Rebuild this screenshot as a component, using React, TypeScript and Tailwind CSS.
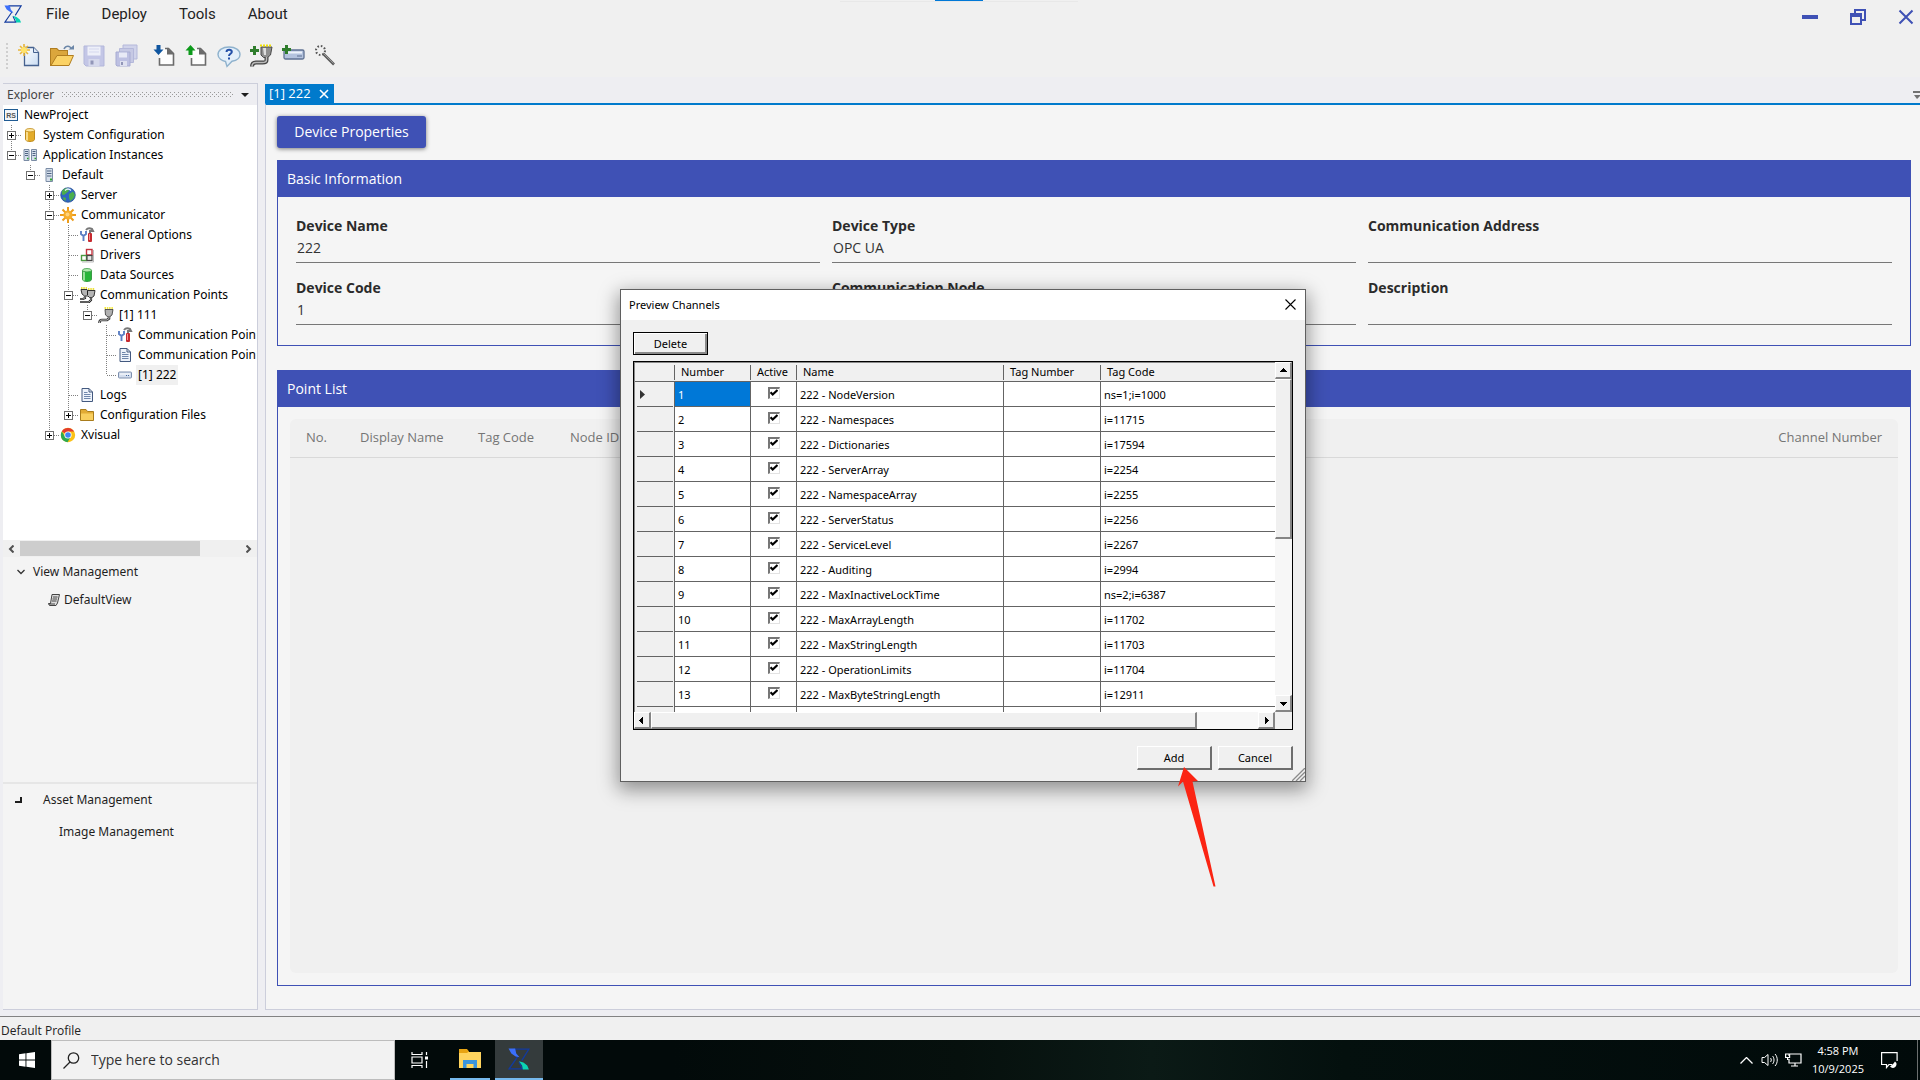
import type { ReactNode } from "react";

/* ---------- Icons ---------- */

function Logo({ size }: { size: number }) {
  return (
    <svg width={size} height={size} viewBox="0 0 20 20" fill="none">
      <path d="M5 1H19L12.500 11.500M9 7.500 1 19H13L10 12.500" stroke="#123a9e" strokeWidth="1.200" />
      <path d="M.5.500H6.500L7.500 5 10.500 8.500 7 7.800 3 5z" fill="#3b6ffa" />
      <path d="M10 12l4 1.200 3.500 2.800 1.500 3.500H13.500L12.800 16z" fill="#0bd3b4" />
    </svg>
  );
}

const NewIcon = () => (
  <svg width="24" height="24" viewBox="0 0 24 24">
    <defs>
      <linearGradient id="pg" x1="0" y1="0" x2="1" y2="1">
        <stop offset="0" stopColor="#fff" />
        <stop offset="1" stopColor="#c9dcf2" />
      </linearGradient>
    </defs>
    <path d="M6.500 3.500h9l5 5v13h-14z" fill="url(#pg)" stroke="#46628f" strokeWidth="1.300" />
    <path d="M15.500 3.500v5h5" fill="#dce6f4" stroke="#46628f" />
    <path d="M6 0v12M0 6h12M2 2l8 8M10 2 2 10" stroke="#e8b53a" strokeWidth="1.600" />
    <circle cx="6" cy="6" r="3" fill="#ffe36b" />
  </svg>
);
const OpenIcon = () => (
  <svg width="24" height="24" viewBox="0 0 24 24">
    <path d="M0 4h7l2 2h9v16H0z" fill="#b07d20" />
    <path d="M1 5h5.500l2 2H17v14H1z" fill="#dba63c" />
    <path d="M1 21.500 7 11.500h16.500L19 21.500z" fill="#fbd265" stroke="#b07d20" />
    <path d="M14 5c2-4 6-3.500 7.500 0" fill="none" stroke="#6c87a8" strokeWidth="1.600" />
    <path d="M18.500 5.500H24V1z" fill="#6c87a8" />
  </svg>
);
const SaveIcon = () => (
  <svg width="24" height="24" viewBox="0 0 24 24">
    <path d="M2 2h20v20H4l-2-2z" fill="#c3c6e6" stroke="#b3b7da" />
    <path d="M5.500 2.500h13v9h-13z" fill="#eef0f9" />
    <path d="M7 5h10M7 8h10" stroke="#d5d8ee" />
    <path d="M6.500 15h11v7h-11z" fill="#d6d9ec" />
    <path d="M8.500 16.500h3v4h-3z" fill="#9296b8" />
  </svg>
);
const SaveAllIcon = () => (
  <svg width="24" height="24" viewBox="0 0 24 24">
    <path d="M9 1h14v14H9z" fill="#d0d3ea" stroke="#b4b8da" />
    <path d="M5.500 4.500h14v14h-14z" fill="#c6c9e4" stroke="#b4b8da" />
    <path d="M2 8h14v14H3l-1-1z" fill="#bdc0e2" stroke="#a8acd2" />
    <path d="M5 8.500h8v5H5z" fill="#e8eaf6" />
    <path d="M6 17h7v5H6z" fill="#dfe1f0" />
    <path d="M7 18h2v3H7z" fill="#9296b8" />
  </svg>
);
const TransferIcon = ({ up = false }: { up?: boolean }) => (
  <svg width="24" height="24" viewBox="0 0 24 24">
    <path d="M7 4.500h8l5.500 5.500v11H6.500V13" fill="#fdfdfd" />
    <path d="M12 4.500h3.500l5 5V21H6.500V14" fill="none" stroke="#6b6b6b" strokeWidth="1.600" />
    <path d="M14 3.500 21.300 10.500H14z" fill="#6b6b6b" />
    {up ? (
      <path d="M5.500 1 10.500 6.500H7.500V11H3.500V6.500H.500z" fill="#0d9a1b" />
    ) : (
      <path d="M5.500 11 10.500 5.500H7.500V1H3.500V5.500H.500z" fill="#0f559f" />
    )}
  </svg>
);
const HelpIcon = () => (
  <svg width="24" height="24" viewBox="0 0 24 24">
    <path
      d="M12 3C5.500 3 1 6.300 1 10.500c0 4 4 6.500 7.500 7L10 22.500l5-5.300c4.500-.700 8-3 8-6.700C23 6.300 18.500 3 12 3z"
      fill="#e3effa"
      stroke="#8fb2cd"
      strokeWidth="1.400"
    />
    <path d="M9.500 8c.200-3 5.500-2.800 5.300 0C14.700 9.700 12 10 12 12" fill="none" stroke="#2450a8" strokeWidth="2" />
    <path d="M11 13.500h2v2h-2z" fill="#2450a8" />
  </svg>
);
const AddPointIcon = () => (
  <svg width="24" height="24" viewBox="0 0 24 24">
    <path d="M12 3h11l-1.500 8-3 2.500h-4L12 11z" fill="#8f8f8f" stroke="#4a4a4a" />
    <path d="M14 4h3v7h-2z" fill="#dedede" />
    <path d="M11 1.500h12" stroke="#f2e200" strokeWidth="2" strokeDasharray="2 1" />
    <path d="M17.500 13v3c0 2-1 2.500-4 2.500H7c-2.500 0-4 1-4 4" fill="none" stroke="#444" strokeWidth="4" />
    <path d="M17.500 13v3c0 2-1 2.500-4 2.500H7c-2.500 0-4 1-4 4" fill="none" stroke="#bbb" strokeWidth="1.500" />
    <path d="M5.500 2v9M1 6.500h9" stroke="#2f7d2c" strokeWidth="3" />
  </svg>
);
const AddDeviceIcon = () => (
  <svg width="24" height="24" viewBox="0 0 24 24">
    <rect x="3" y="6" width="20" height="9" rx="1.500" fill="#b4c3de" stroke="#5f7192" strokeWidth="1.300" />
    <path d="M5 8.500h16" stroke="#eef3fb" strokeWidth="2" />
    <path d="M16 12h5" stroke="#5f7192" />
    <path d="M5.500 1v9M1 5.500h9" stroke="#2f7d2c" strokeWidth="3" />
  </svg>
);
const WandIcon = () => (
  <svg width="24" height="24" viewBox="0 0 24 24">
    <circle cx="7.500" cy="6.500" r="4.500" fill="none" stroke="#555" strokeWidth="2" strokeDasharray="1.600 1.900" />
    <path d="m10 9.500 11 11" stroke="#5b5b5b" strokeWidth="2.600" />
    <path d="m10.500 9.500 10 10" stroke="#aaa" strokeWidth=".8" />
  </svg>
);

function ToolIcon() {
  return (
    <svg width="16" height="16" viewBox="0 0 16 16">
      <path d="M2 4v3l2.500 2v5M7 4v3L4.500 9" fill="none" stroke="#5b7fc4" strokeWidth="1.900" />
      <path d="M7 3c2-2.500 4-2 6-1l1 2h-3v3" fill="none" stroke="#777" strokeWidth="2" />
      <rect x="9" y="6" width="4" height="9" rx="1" fill="#c62a2f" />
      <path d="M10.500 7v6" stroke="#f19090" />
    </svg>
  );
}
function PageIcon() {
  return (
    <svg width="16" height="16" viewBox="0 0 16 16">
      <path d="M3 1.500h7l3.500 3.500v9.500H3z" fill="#eef3fb" stroke="#43597f" />
      <path d="M10 1.500V5h3.500" fill="none" stroke="#43597f" />
      <path d="M5 5.500h3.500M5 7.500h6.500M5 9.500h6.500M5 11.500h6.500" stroke="#6f86ab" />
    </svg>
  );
}
function PlugIcon() {
  return (
    <svg width="16" height="16" viewBox="0 0 16 16">
      <path d="M7 2.500h8L14 8l-2 1.500H9.500L7.500 8z" fill="#b0b0b0" stroke="#333" strokeWidth=".8" />
      <path d="M6.500 1h9" stroke="#f0e000" strokeWidth="1.500" strokeDasharray="1.500 .8" />
      <path d="M11 9v2.500l-2 1.500H4c-2 0-2.500 1-2.500 3" fill="none" stroke="#333" strokeWidth="2.600" />
      <path d="M11 9v2.500l-2 1.500H4c-2 0-2.500 1-2.500 3" fill="none" stroke="#ccc" strokeWidth=".9" />
    </svg>
  );
}
function Cylinder({ top, side, edge }: { top: string; side: string; edge: string }) {
  return (
    <svg width="16" height="16" viewBox="0 0 16 16">
      <path d="M3.500 3.500v9c0 1 2 2 4.500 2s4.500-1 4.500-2v-9z" fill={side} stroke={edge} />
      <path d="M5 5v8.500" stroke={top} strokeWidth="1.600" />
      <ellipse cx="8" cy="3.200" rx="4.500" ry="1.700" fill={top} stroke={edge} strokeWidth=".8" />
    </svg>
  );
}

const treeIcons: Record<string, ReactNode> = {
  rs: (
    <svg width="16" height="16" viewBox="0 0 16 16">
      <rect x="1.500" y="2.500" width="13" height="11" fill="#f3f6fa" stroke="#1f5b93" />
      <text x="8" y="11" textAnchor="middle" fontFamily="Liberation Sans, sans-serif" fontSize="7" fontWeight="700" fill="#555">
        RS
      </text>
    </svg>
  ),
  db: <Cylinder top="#ffe9a3" side="#e3ac2a" edge="#c08c1c" />,
  green: <Cylinder top="#b2ecb0" side="#27b53a" edge="#3b9b46" />,
  servers: (
    <svg width="16" height="16" viewBox="0 0 16 16">
      <path d="M2 2.500h5v11H2zM9.500 2.500h5v11h-5z" fill="#d7e0ec" stroke="#7b8ca5" />
      <path d="M3 4.500h3M3 6.500h3M3 8.500h3M10.500 4.500h3M10.500 6.500h3M10.500 8.500h3" stroke="#4f6482" />
      <path d="M5 11.500h1.500M12.500 11.500H14" stroke="#2ba52b" strokeWidth="1.500" />
    </svg>
  ),
  server: (
    <svg width="16" height="16" viewBox="0 0 16 16">
      <path d="M5 1.500h6.500v13H5z" fill="#d7e0ec" stroke="#7b8ca5" />
      <path d="M6 4h4.500M6 6.500h4.500M6 9h4.500" stroke="#4f6482" />
      <path d="M9 12.500h2" stroke="#2ba52b" strokeWidth="1.800" />
    </svg>
  ),
  globe: (
    <svg width="16" height="16" viewBox="0 0 16 16">
      <circle cx="8" cy="8" r="7.300" fill="#2f66c2" stroke="#274e8d" strokeWidth=".7" />
      <path d="M2 4c2-2.500 4-3 5.500-2.500L9 4 6 6.500 4 8 2 7.500zM9 7l4-2.500L15 8l-2 4-3 2-1-3.500zM3.500 10 6 11l-.500 3L3 12z" fill="#4cae4c" />
      <path d="M5 3.500c2-2 4-2 6 0" stroke="#e8f3ff" strokeWidth="1.200" fill="none" />
    </svg>
  ),
  sun: (
    <svg width="16" height="16" viewBox="0 0 16 16">
      <path d="M8 0v16M0 8h16M2.500 2.500l11 11M13.500 2.500l-11 11" stroke="#ec9c1b" strokeWidth="2" />
      <circle cx="8" cy="8" r="4.600" fill="#f6ae2d" />
      <circle cx="7.500" cy="7.500" r="2" fill="#ffd27a" />
    </svg>
  ),
  tools: <ToolIcon />,
  drivers: (
    <svg width="16" height="16" viewBox="0 0 16 16">
      <rect x="7.500" y="2.500" width="5.500" height="5.500" fill="#fff" stroke="#c2313c" strokeWidth="1.400" />
      <rect x="2.500" y="8.500" width="5" height="5" fill="#fff" stroke="#4b9a3f" strokeWidth="1.400" />
      <rect x="8" y="8.500" width="5" height="5" fill="#e7e7e7" stroke="#444" strokeWidth="1.200" />
      <path d="M14.500 3v12H3" fill="none" stroke="#bbb" />
    </svg>
  ),
  plugs: (
    <svg width="17" height="16" viewBox="0 0 17 16">
      <path d="M2 2.500h6l.500 1H16L15 9l-2 1.500h-2.500L9 9H5.500L3 7z" fill="#b5b5b5" stroke="#222" strokeWidth=".9" />
      <path d="M8.500 3.500V8" stroke="#222" />
      <path d="M2 1h6M9 2h7" stroke="#e6d800" strokeWidth="1.500" strokeDasharray="1.500 .8" />
      <path d="M6 9v2L4 12H1M12 10.500V13l-2 2H1" fill="none" stroke="#222" strokeWidth="2.200" />
      <path d="M6 9v2L4 12H1M12 10.500V13l-2 2H1" fill="none" stroke="#ccc" strokeWidth=".7" />
    </svg>
  ),
  plug: <PlugIcon />,
  page: <PageIcon />,
  device: (
    <svg width="16" height="16" viewBox="0 0 16 16">
      <rect x="1.500" y="5" width="13" height="6" rx="1" fill="#d4deee" stroke="#7d8fae" />
      <path d="M3 7h10" stroke="#fff" />
      <path d="M9 8.500h1M11 8.500h1" stroke="#44689c" />
    </svg>
  ),
  folder: (
    <svg width="16" height="16" viewBox="0 0 16 16">
      <path d="M1.500 2.500H7l1.500 2h6v9h-13z" fill="#e2ab34" stroke="#a97c1c" />
      <path d="M2 6.500h12v6.500H2z" fill="#f9cf5e" />
    </svg>
  ),
  chrome: (
    <svg width="16" height="16" viewBox="0 0 16 16">
      <circle cx="8" cy="8" r="7.200" fill="#fbc116" />
      <path d="M8 8 1.800 4.400A7.200 7.200 0 0 1 14.200 4.600H8z" fill="#e33b2e" />
      <path d="M1.800 4.400A7.200 7.200 0 0 0 7.500 15.200L10.600 10 8 8 5 9.500z" fill="#2da94f" />
      <circle cx="8" cy="8" r="3.600" fill="#fff" />
      <circle cx="8" cy="8" r="2.800" fill="#4285f4" />
    </svg>
  ),
};

/* ---------- Explorer tree ---------- */

/* Guide codes: v line, t tee, l elbow, P/p and M/m expanders (capital: line goes on below). */
type Row = { guides: string; icon: string; label: string; selected?: boolean };
const tree: Row[] = [
  { guides: "", icon: "rs", label: "NewProject" },
  { guides: "P", icon: "db", label: "System Configuration" },
  { guides: "m", icon: "servers", label: "Application Instances" },
  { guides: " m", icon: "server", label: "Default" },
  { guides: "  P", icon: "globe", label: "Server" },
  { guides: "  M", icon: "sun", label: "Communicator" },
  { guides: "  vt", icon: "tools", label: "General Options" },
  { guides: "  vt", icon: "drivers", label: "Drivers" },
  { guides: "  vt", icon: "green", label: "Data Sources" },
  { guides: "  vM", icon: "plugs", label: "Communication Points" },
  { guides: "  vvm", icon: "plug", label: "[1] 111" },
  { guides: "  vv t", icon: "tools", label: "Communication Poin" },
  { guides: "  vv t", icon: "page", label: "Communication Poin" },
  { guides: "  vv l", icon: "device", label: "[1] 222", selected: true },
  { guides: "  vt", icon: "page", label: "Logs" },
  { guides: "  vp", icon: "folder", label: "Configuration Files" },
  { guides: "  p", icon: "chrome", label: "Xvisual" },
];

function Guide({ code, label }: { code: string; label: string }) {
  if (code === " ") return <span className="w-[19px] shrink-0" />;
  const box = "PpMm".includes(code);
  const down = "vtPM".includes(code);
  const drawing = (
    <svg width="19" height="20" viewBox="0 0 19 20" fill="none" shapeRendering="crispEdges">
      <path d={down ? "M8.500 0V20" : "M8.500 0V10"} stroke="#808080" strokeDasharray="1 1" />
      {code !== "v" && <path d="M9 10.500H19" stroke="#808080" strokeDasharray="1 1" />}
      {box && (
        <>
          <rect x="4.500" y="6.500" width="8" height="8" fill="#fff" stroke="#707070" />
          <path d="M6 10.500h5" stroke="#000" />
          {"Pp".includes(code) && <path d="M8.500 8v5" stroke="#000" />}
        </>
      )}
    </svg>
  );
  return box ? (
    <button aria-label={"Toggle " + label} className="w-[19px] shrink-0">
      {drawing}
    </button>
  ) : (
    <span className="w-[19px] shrink-0">{drawing}</span>
  );
}

function Explorer() {
  return (
    <aside className="ml-[3px] flex w-[255px] shrink-0 flex-col border-t border-r border-b border-[#cccedb] bg-[#f4f4f4] font-['Noto_Sans','Open_Sans',sans-serif] text-xs text-black">
      <header className="flex h-[21px] shrink-0 items-center gap-2 bg-[#eeeef2] pr-2 pl-1 text-xs text-[#444]">
        <span>Explorer</span>
        <svg className="h-[5px] min-w-0 flex-1" shapeRendering="crispEdges">
          <defs>
            <pattern id="grip" width="4" height="4" patternUnits="userSpaceOnUse">
              <path d="M0 0h1v1H0zM2 2h1v1H2z" fill="#999" />
            </pattern>
          </defs>
          <rect width="100%" height="5" fill="url(#grip)" />
        </svg>
        <button aria-label="Panel menu">
          <svg width="8" height="4" viewBox="0 0 8 4">
            <path d="M0 0h8L4 4z" fill="#1e1e1e" />
          </svg>
        </button>
      </header>
      <ul className="h-[435px] shrink-0 overflow-hidden bg-white">
        {tree.map((row, i) => (
          <li key={i} className="flex h-5 items-center whitespace-nowrap">
            {row.guides.split("").map((code, j) => (
              <Guide key={j} code={code} label={row.label} />
            ))}
            <span className="w-4 shrink-0">{treeIcons[row.icon]}</span>
            <span className={row.selected ? "ml-[3px] bg-[#f0f0f0] px-[2px] leading-5" : "ml-[3px] px-[2px] leading-5"}>
              {row.label}
            </span>
          </li>
        ))}
      </ul>
      <div className="flex h-[17px] shrink-0 items-center gap-[6px] bg-[#f0f0f0] px-[5px]">
        <svg width="6" height="8" viewBox="0 0 6 8" fill="none" stroke="#505050" strokeWidth="2">
          <path d="M5.500.500 2 4l3.500 3.500" />
        </svg>
        <div className="h-[15px] flex-1">
          <div className="h-full w-[82%] bg-[#cdcdcd]" />
        </div>
        <svg width="6" height="8" viewBox="0 0 6 8" fill="none" stroke="#505050" strokeWidth="2">
          <path d="M.500.500 4 4 .500 7.500" />
        </svg>
      </div>
      <section className="h-[227px] shrink-0 border-b-2 border-[#e6e6e6] pt-px text-[#1e1e1e]">
        <button className="flex h-7 items-center gap-2 pl-[14px]">
          <svg width="8" height="6" viewBox="0 0 8 6" fill="none" stroke="#333" strokeWidth="1.300">
            <path d="M.500 1 4 4.500 7.500 1" />
          </svg>
          View Management
        </button>
        <button className="flex h-7 items-center gap-1 pl-[45px]">
          <svg width="12" height="12" viewBox="0 0 12 12" fill="none" stroke="#444">
            <path d="M4 .500h7.500L9.500 9 8 11.500H1.500L.500 9.500H2.500z" fill="#ddd" />
            <path d="M5 3h4.500M4.500 5H9M4 7h4.500M.500 10H7" />
          </svg>
          DefaultView
        </button>
      </section>
      <section className="text-[#1e1e1e]">
        <button className="flex h-8 items-center gap-[21px] pl-3">
          <svg width="7" height="6" viewBox="0 0 7 6">
            <path d="M5 0h2v6H0V4h5z" fill="#1e1e1e" />
          </svg>
          Asset Management
        </button>
        <button className="flex h-8 items-center pl-14">Image Management</button>
      </section>
    </aside>
  );
}

/* ---------- Document ---------- */

const fields = [
  ["Device Name", "222"],
  ["Device Type", "OPC UA"],
  ["Communication Address", ""],
  ["Device Code", "1"],
  ["Communication Node", ""],
  ["Description", ""],
];

function DocumentArea() {
  return (
    <main className="ml-[7px] flex min-w-0 flex-1 flex-col">
      <div className="mt-px flex h-[19px] items-stretch justify-between">
        <div className="flex items-center gap-2 bg-[#007acc] pr-[5px] pl-1 text-[13px] text-white">
          <span>[1] 222</span>
          <button aria-label="Close tab">
            <svg width="10" height="10" viewBox="0 0 10 10" stroke="#fff" strokeWidth="1.600">
              <path d="m1 1 8 8M9 1 1 9" />
            </svg>
          </button>
        </div>
        <button aria-label="Open documents" className="mt-1">
          <svg width="7" height="9" viewBox="0 0 7 9" fill="#717171">
            <path d="M0 0h7v2H0zM1 4h7L4 8z" />
          </svg>
        </button>
      </div>
      <div className="flex flex-1 flex-col border-t-2 border-b border-l border-t-[#007acc] border-b-[#cccedb] border-l-[#cccedb] bg-[#f5f5f5] pt-[11px] pr-[9px] pb-[23px] pl-[11px] text-sm">
        <button className="h-8 w-[149px] self-start rounded-[3px] bg-[#3f51b5] text-white shadow-[0_1px_4px_rgba(0,0,0,0.5)]">
          Device Properties
        </button>
        <section className="mt-3 border border-[#3f51b5]">
          <h2 className="flex h-9 items-center bg-[#3f51b5] px-[9px] text-white">Basic Information</h2>
          <div className="grid grid-cols-3 gap-x-3 gap-y-[13px] px-[18px] pt-[17px] pb-5">
            {fields.map(([label, value]) => (
              <label key={label} className="block leading-6 text-[#333]">
                <span className="block font-bold text-[#2b2b2b]">{label}</span>
                <input
                  readOnly
                  defaultValue={value}
                  className="block h-[25px] w-full border-b border-[#777] bg-transparent pb-[6px] pl-px outline-none"
                />
              </label>
            ))}
          </div>
        </section>
        <section className="mt-6 flex flex-1 flex-col border border-[#3f51b5]">
          <h2 className="flex h-9 items-center bg-[#3f51b5] px-[9px] text-white">Point List</h2>
          <div className="mx-3 mt-3 mb-3 flex-1 rounded-md bg-[#f0f0f0]">
            <table className="w-full text-left text-[13px] text-[#757575]">
              <thead>
                <tr className="h-[38px] border-b border-[#d9d9d9]">
                  <th className="w-[54px] pl-4 font-normal">No.</th>
                  <th className="w-[118px] pl-4 font-normal">Display Name</th>
                  <th className="w-[92px] pl-4 font-normal">Tag Code</th>
                  <th className="pl-4 font-normal">Node ID</th>
                  <th className="pr-4 text-right font-normal">Channel Number</th>
                </tr>
              </thead>
            </table>
          </div>
        </section>
      </div>
    </main>
  );
}

/* ---------- Dialog ---------- */

const channels = [
  ["NodeVersion", "ns=1;i=1000"],
  ["Namespaces", "i=11715"],
  ["Dictionaries", "i=17594"],
  ["ServerArray", "i=2254"],
  ["NamespaceArray", "i=2255"],
  ["ServerStatus", "i=2256"],
  ["ServiceLevel", "i=2267"],
  ["Auditing", "i=2994"],
  ["MaxInactiveLockTime", "ns=2;i=6387"],
  ["MaxArrayLength", "i=11702"],
  ["MaxStringLength", "i=11703"],
  ["OperationLimits", "i=11704"],
  ["MaxByteStringLength", "i=12911"],
];

function ScrollButton({ label, d }: { label: string; d: string }) {
  return (
    <button
      aria-label={label}
      className="flex h-[17px] w-[17px] shrink-0 items-center justify-center border-t border-r-2 border-b-2 border-l border-t-white border-r-[#858585] border-b-[#858585] border-l-white bg-[#f0f0f0]"
    >
      <svg width="7" height="7" viewBox="0 0 7 7" shapeRendering="crispEdges">
        <path d={d} fill="#000" />
      </svg>
    </button>
  );
}

function Checkbox({ label }: { label: string }) {
  return (
    <span className="relative mx-auto mb-[2px] block h-3 w-3">
      <input
        type="checkbox"
        defaultChecked
        aria-label={label}
        className="peer block h-3 w-3 appearance-none border-t-2 border-r border-b border-l-2 border-t-[#767676] border-r-[#e3e3e3] border-b-[#e3e3e3] border-l-[#767676] bg-white"
      />
      <svg
        className="pointer-events-none absolute top-[2px] left-[2px] opacity-0 peer-checked:opacity-100"
        width="8"
        height="8"
        viewBox="0 0 8 8"
        fill="none"
        stroke="#000"
        strokeWidth="2.200"
      >
        <path d="m.500 3.200 2.200 2.300L7.500 1" />
      </svg>
    </span>
  );
}

function PreviewDialog() {
  const th = "relative bg-[#f0f0f0] pt-px pl-[6px] text-left font-normal after:absolute after:top-[2px] after:right-0 after:bottom-px after:w-px after:bg-[#646464]";
  const td = "border-r border-b border-[#646464] pt-[2px] pl-[3px]";
  const button =
    "h-6 w-[75px] border-t border-r-2 border-b-2 border-l border-t-white border-r-[#6d6d6d] border-b-[#6d6d6d] border-l-white bg-[#f0f0f0] pt-px";
  return (
    <div
      role="dialog"
      aria-label="Preview Channels"
      className="absolute top-[289px] left-[620px] w-[686px] border border-[#5f5f5f] bg-[#f0f0f0] font-['Noto_Sans','Open_Sans',sans-serif] text-[11px] text-black shadow-[0_6px_18px_2px_rgba(0,0,0,0.4)]"
    >
      <header className="flex h-[30px] items-center justify-between bg-white pr-[9px] pl-2">
        <span>Preview Channels</span>
        <button aria-label="Close" className="pb-[2px]">
          <svg width="11" height="11" viewBox="0 0 11 11" stroke="#000" strokeWidth="1.100">
            <path d="m.500.500 10 10M10.500.500l-10 10" />
          </svg>
        </button>
      </header>
      <div className="px-3 pt-3 pb-[11px]">
        <button className="block h-[23px] w-[75px] border border-black bg-[#f0f0f0] pt-px shadow-[inset_1px_1px_0_#fff,inset_-2px_-2px_0_#8a8a8a]">
          Delete
        </button>
        <div className="mt-[6px] flex flex-col border border-black bg-[#f0f0f0]">
          <div className="flex">
            <div className="h-[350px] min-w-0 flex-1 overflow-hidden border-t border-l border-[#8a8a8a]">
              <table className="w-full table-fixed border-separate border-spacing-0">
                <colgroup>
                  <col className="w-10" />
                  <col className="w-[76px]" />
                  <col className="w-[46px]" />
                  <col className="w-[207px]" />
                  <col className="w-[97px]" />
                  <col />
                </colgroup>
                <thead>
                  <tr className="h-[19px] [&>th]:border-b [&>th]:border-[#646464]">
                    <th aria-label="Row" className={th} />
                    <th className={th}>Number</th>
                    <th className={th}>Active</th>
                    <th className={th}>Name</th>
                    <th className={th}>Tag Number</th>
                    <th className="bg-[#f0f0f0] pt-px pl-[6px] text-left font-normal">Tag Code</th>
                  </tr>
                </thead>
                <tbody>
                  {channels.map(([name, code], i) => (
                    <tr key={name} className="h-[25px] bg-white">
                      <td className="border-r border-[#646464] bg-[#f0f0f0] p-0">
                        <div className="mr-px ml-[2px] flex h-[25px] items-center border-b border-[#646464] pl-[3px]">
                          {i === 0 && (
                            <svg width="5" height="9" viewBox="0 0 5 9">
                              <path d="M0 0 5 4.500 0 9z" fill="#333" />
                            </svg>
                          )}
                        </div>
                      </td>
                      <td
                        className={
                          i === 0
                            ? "border-r border-b border-[#646464] bg-[#0078d7] pt-[2px] pl-[3px] text-white"
                            : td
                        }
                      >
                        {i + 1}
                      </td>
                      <td className="border-r border-b border-[#646464] p-0">
                        <Checkbox label={"Active " + name} />
                      </td>
                      <td className={td}>222 - {name}</td>
                      <td className={td} />
                      <td className="border-b border-[#646464] pt-[2px] pl-[3px]">{code}</td>
                    </tr>
                  ))}
                  <tr className="h-[25px] bg-white">
                    <td className="border-r border-[#646464] bg-[#f0f0f0]" />
                    <td className={td} />
                    <td className={td} />
                    <td className={td} />
                    <td className={td} />
                    <td />
                  </tr>
                </tbody>
              </table>
            </div>
            <div className="flex w-[17px] flex-col bg-[#f7f7f7]">
              <ScrollButton label="Scroll up" d="M3 1h1v1h1v1h1v1h1v1H0V4h1V3h1V2h1z" />
              <div className="flex-1">
                <div className="h-[160px] border-t border-r-2 border-b-2 border-l border-t-white border-r-[#858585] border-b-[#858585] border-l-white bg-[#f0f0f0]" />
              </div>
              <ScrollButton label="Scroll down" d="M0 2h7v1H6v1H5v1H4v1H3V5H2V4H1V3H0z" />
            </div>
          </div>
          <div className="flex h-[17px] pr-[17px]">
            <ScrollButton label="Scroll left" d="M0 3h1V2h1V1h1V0h1v7H3V6H2V5H1V4H0z" />
            <div className="flex-1 bg-[#f7f7f7]">
              <div className="h-[17px] w-[90%] border-t border-r-2 border-b-2 border-l border-t-white border-r-[#858585] border-b-[#858585] border-l-white bg-[#f0f0f0]" />
            </div>
            <ScrollButton label="Scroll right" d="M2 0h1v1h1v1h1v1h1v1H5v1H4v1H3v1H2z" />
          </div>
        </div>
        <div className="mt-4 flex justify-end gap-[6px]">
          <button className={button}>Add</button>
          <button className={button}>Cancel</button>
        </div>
      </div>
      <svg className="absolute right-0 bottom-0" width="13" height="13" viewBox="0 0 13 13" stroke="#8a8a8a" strokeWidth="1.300">
        <path d="M0 13 13 0M4 13l9-9M8 13l5-5" />
      </svg>
      <svg className="absolute top-[477px] left-[557px]" width="38" height="120" viewBox="0 0 38 120">
        <path d="M6 0 20 14 14.500 14.500 37.500 119.500 35.500 119.500 5 14.500 0 19.500z" fill="#fb2413" />
      </svg>
    </div>
  );
}

/* ---------- Frame ---------- */

const tools: [string, ReactNode][] = [
  ["New", <NewIcon />],
  ["Open", <OpenIcon />],
  ["Save", <SaveIcon />],
  ["Save all", <SaveAllIcon />],
  ["Download", <TransferIcon />],
  ["Upload", <TransferIcon up />],
  ["Help", <HelpIcon />],
  ["Add point", <AddPointIcon />],
  ["Add device", <AddDeviceIcon />],
  ["Wizard", <WandIcon />],
];

function TopBar() {
  return (
    <header className="shrink-0 bg-[#f0f0f0]">
      <div className="flex h-7 items-center">
        <nav className="flex flex-1 items-center gap-8 pl-1 font-[Roboto,sans-serif] text-[15px] text-[#222]">
          <span className="-mr-2">
            <Logo size={18} />
          </span>
          <button>File</button>
          <button>Deploy</button>
          <button>Tools</button>
          <button>About</button>
        </nav>
        <div className="flex w-[238px] justify-center self-start border-b border-[#e8e8e8] bg-[#f0f0f0]">
          <div className="h-px w-12 bg-[#0078d7]" />
        </div>
        <div className="flex flex-1 items-center justify-end gap-8 pt-[6px] pr-[6px]">
          <button aria-label="Minimize">
            <svg width="16" height="16" viewBox="0 0 16 16">
              <path d="M0 6h16v4H0z" fill="#3f51b5" />
            </svg>
          </button>
          <button aria-label="Restore">
            <svg width="16" height="16" viewBox="0 0 16 16" fill="none" stroke="#3f51b5" strokeWidth="2">
              <path d="M5 4V1h10v10h-3M1 5h10v10H1z" />
              <path d="M0 6h12" strokeWidth="4" />
            </svg>
          </button>
          <button aria-label="Close window">
            <svg width="16" height="16" viewBox="0 0 16 16" stroke="#3f51b5" strokeWidth="2">
              <path d="m1.500 1.500 13 13M14.500 1.500l-13 13" />
            </svg>
          </button>
        </div>
      </div>
      <div className="flex h-[49px] items-center pt-[6px] pl-[6px]">
        <span className="mr-[6px] h-[26px] w-[2px] bg-[linear-gradient(#cfcfcf_50%,transparent_50%)] bg-[length:2px_4px]" />
        {tools.map(([label, icon], i) => (
          <button
            key={label}
            aria-label={label}
            className={i === 4 ? "ml-[7px] flex w-8 justify-center" : "flex w-8 justify-center"}
          >
            {icon}
          </button>
        ))}
      </div>
    </header>
  );
}

function Taskbar() {
  return (
    <footer className="flex h-10 shrink-0 bg-[linear-gradient(90deg,#020a0a_0%,#020a0a_35%,#06100d_50%,#0b1a16_60%,#04100e_70%,#010a0a_100%)] text-white">
      <button aria-label="Start" className="flex w-[51px] items-center justify-center pl-[3px]">
        <svg width="16" height="16" viewBox="0 0 16 16" fill="#fff">
          <path d="M0 2.200 6.500 1.300V7.600H0zM7.400 1.200 16 0v7.600H7.400zM0 8.400h6.500v6.300L0 13.800zM7.400 8.400H16V16l-8.600-1.200z" />
        </svg>
      </button>
      <label className="flex w-[344px] items-center gap-[11px] border border-[#bdbdbd] bg-[#f2f2f2] pl-[11px]">
        <svg width="17" height="17" viewBox="0 0 17 17" fill="none" stroke="#222" strokeWidth="1.300">
          <circle cx="10.500" cy="6" r="5.200" />
          <path d="M7 10 .500 16.500" />
        </svg>
        <input
          aria-label="Search"
          placeholder="Type here to search"
          className="min-w-0 flex-1 bg-transparent text-sm outline-none placeholder:text-[#333]"
        />
      </label>
      <button aria-label="Task view" className="flex w-12 items-center justify-center">
        <svg width="17" height="16" viewBox="0 0 17 16" fill="none" stroke="#fff" strokeWidth="1.200">
          <path d="M1 0v2.500h10V0M1 5h10v6H1zM1 16v-2.500h10V16M15.500 0v3M15.500 9v7" />
          <path d="M14 4.500h3v3h-3z" fill="#fff" stroke="none" />
        </svg>
      </button>
      <button aria-label="File Explorer" className="ml-[7px] flex w-10 items-center justify-center border-b-2 border-[#76b9ed]">
        <svg width="22" height="20" viewBox="0 0 22 20">
          <path d="M0 1h8l2 2h12v16H0z" fill="#ffd45e" />
          <path d="M0 0h8l2 2.500L8 4H0z" fill="#e8a413" />
          <path d="M4 11h14v8h-3.500v-4h-7v4H4z" fill="#3b94dd" />
        </svg>
      </button>
      <button aria-label="Project Studio" className="ml-[5px] flex w-12 items-center justify-center border-b-2 border-[#76b9ed] bg-[#343b3c]">
        <Logo size={22} />
      </button>
      <div className="ml-auto flex items-center pr-[2px] text-[11px]">
        <svg width="13" height="7" viewBox="0 0 13 7" fill="none" stroke="#fff" strokeWidth="1.300">
          <path d="M.500 6.500l6-6 6 6" />
        </svg>
        <svg className="ml-2" width="18" height="14" viewBox="0 0 18 14" fill="none" stroke="#fff">
          <path d="M1 4.500h2.500L7 1.500v11L3.500 9.500H1zM9.500 5c1 1 1 3 0 4M11.500 3c2 2 2 6 0 8M14 1c3 3 3 9 0 12" />
        </svg>
        <svg className="ml-[6px]" width="17" height="14" viewBox="0 0 17 14" fill="none" stroke="#fff" strokeWidth="1.200">
          <path d="M4 3V1h12v9H4V6M10 10v3M6 13h7M.600 1h4v3.500h-4zM2.600 4.500V7" />
        </svg>
        <div className="mx-[10px] text-center leading-[18px]">
          <div>4:58 PM</div>
          <div>10/9/2025</div>
        </div>
        <svg className="ml-[7px]" width="17" height="17" viewBox="0 0 17 17" fill="none" stroke="#fff" strokeWidth="1.200">
          <path d="M11 12.500H8l-2.500 3v-3H.600V.600h15.500V9" />
          <path d="M14 9.500c-2 3-4 4-5 5 2 2.500 6 1.500 6.500-2 .200-1.500-.500-2-1.500-3z" fill="#fff" stroke="none" />
        </svg>
        <span className="ml-[19px] h-10 w-px bg-[#6b6f6f]" />
      </div>
    </footer>
  );
}

export default function App() {
  return (
    <div className="relative flex h-screen flex-col overflow-hidden bg-[#eeeef2] font-['Open_Sans','Noto_Sans',sans-serif]">
      <TopBar />
      <div className="flex min-h-0 flex-1 pt-[6px] pb-[6px]">
        <Explorer />
        <DocumentArea />
      </div>
      <div className="h-6 shrink-0 overflow-hidden border-t border-[#828282] bg-[#f0f0f0] pt-1 pl-px text-xs leading-5 text-[#222]">
        Default Profile
      </div>
      <Taskbar />
      <PreviewDialog />
    </div>
  );
}
